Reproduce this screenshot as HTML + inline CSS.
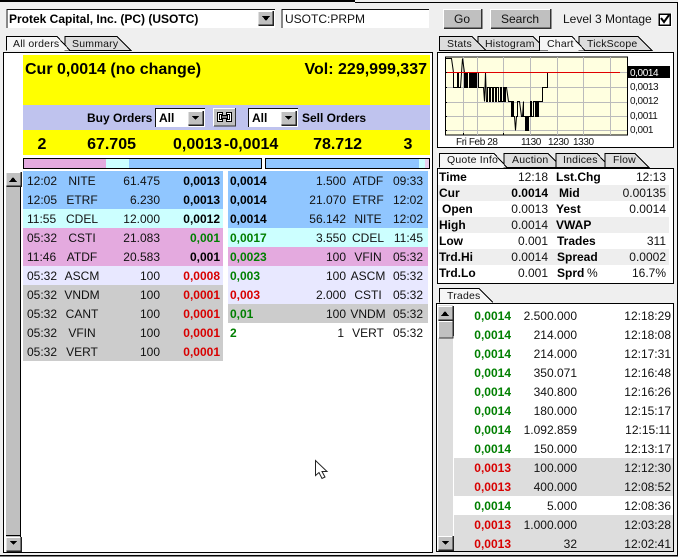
<!DOCTYPE html>
<html><head><meta charset="utf-8">
<style>
html,body{margin:0;padding:0;background:#fff;overflow:hidden}
svg{display:block}
text{font-family:"Liberation Sans",sans-serif;font-size:12px;fill:#111}
.b{font-weight:bold}
.r{text-anchor:end}
.c{text-anchor:middle}
.h{font-size:16px;font-weight:bold;fill:#000}
.t{font-size:10.5px;letter-spacing:.2px}
.s{font-size:10px;letter-spacing:-.4px}
.g{font-weight:bold;fill:#007f00}
.d{font-weight:bold;fill:#d80000}
.k{font-weight:bold;fill:#000}
</style></head><body>
<svg width="682" height="559" viewBox="0 0 682 559" xmlns="http://www.w3.org/2000/svg" shape-rendering="crispEdges">
<defs>
<g id="btn"><rect width="15" height="14" fill="#c0c0c0"/><path d="M0 13.5V.5H14.5" fill="none" stroke="#fff"/><path d="M.5 14H15V0" fill="none" stroke="#222" stroke-width="1.5"/></g>
</defs>
<rect x="0" y="0" width="678" height="556" fill="#efefef"/>
<rect x="0" y="0" width="355" height="2" fill="#000"/>
<rect x="355" y="2" width="323" height="1" fill="#000"/>
<rect x="677" y="2" width="1" height="554" fill="#000"/>
<rect x="0" y="555" width="678" height="1.5" fill="#000"/>

<!-- top controls -->
<rect x="6" y="9" width="269" height="19" fill="#fff"/>
<path d="M7 28V9.5H275" fill="none" stroke="#111"/>
<text x="9" y="23" class="b" style="fill:#000">Protek Capital, Inc. (PC) (USOTC)</text>
<use href="#btn" x="258" y="11"/>
<path d="M262 16h8l-4 5z" fill="#000"/>
<rect x="281" y="9" width="148" height="19" fill="#fff"/>
<path d="M282 28V9.5H429" fill="none" stroke="#111"/>
<text x="285" y="23">USOTC:PRPM</text>
<rect x="443" y="9" width="38" height="19" fill="#c0c0c0"/><path d="M443.500 28V9.500H481" fill="none" stroke="#fff"/><path d="M444 28H481.500V9" fill="none" stroke="#333" stroke-width="1.500"/>
<text x="462" y="23" class="c">Go</text>
<rect x="490" y="9" width="60" height="19" fill="#c0c0c0"/><path d="M490.500 28V9.500H550" fill="none" stroke="#fff"/><path d="M491 28H550.500V9" fill="none" stroke="#333" stroke-width="1.500"/>
<text x="520" y="23" class="c">Search</text>
<text x="563" y="23">Level 3 Montage</text>
<rect x="658" y="13" width="14" height="14" fill="#fff"/>
<rect x="659" y="14" width="11" height="11" fill="#fff" stroke="#000" stroke-width="1.500"/>
<path d="M661 18l3 4 5-7" fill="none" stroke="#000" stroke-width="2" shape-rendering="auto"/>

<!-- left tabs -->
<path d="M65 50.500V36.500H117L131 50.500Z" fill="#ddd" stroke="#000"/>
<path d="M6.500 50.500V36.500H57L70 50.500" fill="#f6f6f6" stroke="#000"/>
<text x="13" y="47" class="t">All orders</text>
<text x="72" y="47" class="t">Summary</text>

<!-- left panel -->
<rect x="3.500" y="52.500" width="429" height="500" fill="#fff" stroke="#000"/>
<rect x="23" y="55" width="407" height="50" fill="#ffff00"/>
<rect x="23" y="105" width="407" height="25" fill="#bfc3ee"/>
<rect x="23" y="130" width="407" height="25" fill="#ffff00"/>
<text x="25" y="74" class="h">Cur 0,0014 (no change)</text>
<text x="427" y="74" class="h r">Vol: 229,999,337</text>
<text x="87" y="122" class="k">Buy Orders</text>
<text x="302" y="122" class="k">Sell Orders</text>

<rect x="155" y="108" width="50" height="19" fill="#fff"/><path d="M155.500 127V108.500H205" fill="none" stroke="#111"/>
<text x="159" y="122" class="k">All</text>
<use href="#btn" x="188" y="111"/><path d="M192 116h7l-3.500 4z" fill="#000"/>
<rect x="248" y="108" width="50" height="19" fill="#fff"/><path d="M248.500 127V108.500H298" fill="none" stroke="#111"/>
<text x="252" y="122" class="k">All</text>
<use href="#btn" x="281" y="111"/><path d="M285 116h7l-3.500 4z" fill="#000"/>
<rect x="213" y="108" width="22" height="18" fill="#c0c0c0"/><path d="M213.500 126V108.500H235" fill="none" stroke="#fff"/><path d="M214 126H235.500V108" fill="none" stroke="#333"/>
<path d="M217.500 112.500h5v3h4v-3h5v9h-5v-3h-4v3h-5z" fill="#fff" stroke="#000"/>
<path d="M219.500 114.500h2v5h-2zM227.500 114.500h2v5h-2zM221 117h6" fill="none" stroke="#000"/>

<text x="42" y="149" class="h c">2</text>
<text x="136" y="149" class="h r">67.705</text>
<text x="173" y="149" class="h">0,0013</text>
<text x="224" y="149" class="h">-0,0014</text>
<text x="362" y="149" class="h r">78.712</text>
<text x="408" y="149" class="h c">3</text>

<rect x="24" y="159" width="82" height="9" fill="#e4aadf"/>
<rect x="106" y="159" width="23" height="9" fill="#ccffff"/>
<rect x="129" y="159" width="133" height="9" fill="#90c6ff"/>
<rect x="23.500" y="158.500" width="238" height="10" fill="none" stroke="#000"/>
<rect x="266" y="159" width="153" height="9" fill="#90c6ff"/>
<rect x="419" y="159" width="6" height="9" fill="#ccffff"/>
<rect x="425" y="159" width="4" height="9" fill="#e8d0ee"/>
<rect x="265.500" y="158.500" width="164" height="10" fill="none" stroke="#000"/>

<!-- left scrollbar -->
<rect x="6" y="172" width="15" height="378" fill="#c0c0c0"/>
<path d="M20.500 172V552" stroke="#000" fill="none"/>
<use href="#btn" x="6" y="172"/><path d="M9 182h8l-4-5z" fill="#000"/>
<rect x="6" y="535" width="15" height="1" fill="#000"/>
<use href="#btn" x="6" y="537"/><path d="M10 541h7l-3.500 4z" fill="#000"/>

<!-- left rows -->
<rect x="23" y="171" width="200" height="38" fill="#90c6ff"/>
<rect x="23" y="209" width="200" height="19" fill="#ccffff"/>
<rect x="23" y="228" width="200" height="38" fill="#e4aadf"/>
<rect x="23" y="266" width="200" height="19" fill="#e8e8ff"/>
<rect x="23" y="285" width="200" height="76" fill="#cccccc"/>
<g>
<text x="27" y="185">12:02</text><text x="82" y="185" class="c">NITE</text><text x="160" y="185" class="r">61.475</text><text x="220" y="185" class="r k">0,0013</text>
<text x="27" y="204">12:05</text><text x="82" y="204" class="c">ETRF</text><text x="160" y="204" class="r">6.230</text><text x="220" y="204" class="r k">0,0013</text>
<text x="27" y="223">11:55</text><text x="82" y="223" class="c">CDEL</text><text x="160" y="223" class="r">12.000</text><text x="220" y="223" class="r k">0,0012</text>
<text x="27" y="242">05:32</text><text x="82" y="242" class="c">CSTI</text><text x="160" y="242" class="r">21.083</text><text x="220" y="242" class="r g">0,001</text>
<text x="27" y="261">11:46</text><text x="82" y="261" class="c">ATDF</text><text x="160" y="261" class="r">20.583</text><text x="220" y="261" class="r k">0,001</text>
<text x="27" y="280">05:32</text><text x="82" y="280" class="c">ASCM</text><text x="160" y="280" class="r">100</text><text x="220" y="280" class="r d">0,0008</text>
<text x="27" y="299">05:32</text><text x="82" y="299" class="c">VNDM</text><text x="160" y="299" class="r">100</text><text x="220" y="299" class="r d">0,0001</text>
<text x="27" y="318">05:32</text><text x="82" y="318" class="c">CANT</text><text x="160" y="318" class="r">100</text><text x="220" y="318" class="r d">0,0001</text>
<text x="27" y="337">05:32</text><text x="82" y="337" class="c">VFIN</text><text x="160" y="337" class="r">100</text><text x="220" y="337" class="r d">0,0001</text>
<text x="27" y="356">05:32</text><text x="82" y="356" class="c">VERT</text><text x="160" y="356" class="r">100</text><text x="220" y="356" class="r d">0,0001</text>
</g>

<!-- right rows -->
<rect x="228" y="171" width="200" height="57" fill="#90c6ff"/>
<rect x="228" y="228" width="200" height="19" fill="#ccffff"/>
<rect x="228" y="247" width="200" height="19" fill="#e4aadf"/>
<rect x="228" y="266" width="200" height="38" fill="#e8e8ff"/>
<rect x="228" y="304" width="200" height="19" fill="#cccccc"/>
<g>
<text x="230" y="185" class="k">0,0014</text><text x="346" y="185" class="r">1.500</text><text x="368" y="185" class="c">ATDF</text><text x="423" y="185" class="r">09:33</text>
<text x="230" y="204" class="k">0,0014</text><text x="346" y="204" class="r">21.070</text><text x="368" y="204" class="c">ETRF</text><text x="423" y="204" class="r">12:02</text>
<text x="230" y="223" class="k">0,0014</text><text x="346" y="223" class="r">56.142</text><text x="368" y="223" class="c">NITE</text><text x="423" y="223" class="r">12:02</text>
<text x="230" y="242" class="g">0,0017</text><text x="346" y="242" class="r">3.550</text><text x="368" y="242" class="c">CDEL</text><text x="423" y="242" class="r">11:45</text>
<text x="230" y="261" class="g">0,0023</text><text x="346" y="261" class="r">100</text><text x="368" y="261" class="c">VFIN</text><text x="423" y="261" class="r">05:32</text>
<text x="230" y="280" class="g">0,003</text><text x="346" y="280" class="r">100</text><text x="368" y="280" class="c">ASCM</text><text x="423" y="280" class="r">05:32</text>
<text x="230" y="299" class="d">0,003</text><text x="346" y="299" class="r">2.000</text><text x="368" y="299" class="c">CSTI</text><text x="423" y="299" class="r">05:32</text>
<text x="230" y="318" class="g">0,01</text><text x="346" y="318" class="r">100</text><text x="368" y="318" class="c">VNDM</text><text x="423" y="318" class="r">05:32</text>
<text x="230" y="337" class="g">2</text><text x="344" y="337" class="r">1</text><text x="368" y="337" class="c">VERT</text><text x="423" y="337" class="r">05:32</text>
</g>

<!-- cursor -->
<path d="M315.500 460.500V475.500L319 472.500L322 478.500L325 477L322 471.500H327Z" fill="#fff" stroke="#222" shape-rendering="auto"/>

<!-- right tabs -->
<path d="M478 50.500V36.500H533L547 50.500Z" fill="#ddd" stroke="#000"/>
<path d="M439.500 50.500V36.500H472L486 50.500Z" fill="#ddd" stroke="#000"/>
<path d="M579 50.500V36.500H638L652 50.500Z" fill="#ddd" stroke="#000"/>
<path d="M539.500 50.500V36.500H572L585 50.500" fill="#f6f6f6" stroke="#000"/>
<text x="447" y="47" class="t">Stats</text>
<text x="485" y="47" class="t">Histogram</text>
<text x="547" y="47" class="t">Chart</text>
<text x="587" y="47" class="t">TickScope</text>

<!-- chart -->
<rect x="437.500" y="52.500" width="236" height="95" fill="#fff" stroke="#000"/>
<rect x="445.500" y="57" width="182" height="78" fill="#ffffe0" stroke="#000"/>
<path d="M463.500 57V135M477.500 57V135M503.500 57V135M530.500 57V135M557.500 57V135M583.500 57V135M610.500 57V135M446 87.500H627M446 102.500H627M446 116.500H627M446 130.500H627" stroke="#bbb" fill="none"/>
<path d="M620 72.500H627" stroke="#bbb" fill="none"/>
<path d="M446 58.500H451.500L453.500 72.500V87.500H457.500V72.500H458.500V87.500H460.500L462.500 58.500L464.500 72.500V87.500H465.500V72.500H466.500V87.500H467.500V72.500H469.500V87.500H470.500V72.500H471.500V87.500H472.500V72.500H473.500V87.500H474.500V72.500H475.500V87.500H476.500V72.500H478.500V87.500H483.500L484.500 101.500L485.500 72.500L486.500 101.500H487.500V87.500H489.500V101.500H490.500V87.500H492.500V101.500H493.500V87.500H495.500V101.500H496.500V87.500H498.500V101.500H500.500V87.500H501.500V101.500H503.500V87.500H504.500V101.500H505.500V87.500H506.500L508.500 101.500H511.500V116.500H512.500V101.500H513.500V116.500H514.500L515.500 130.500L516.500 116.500H517.500V101.500H519.500L521.500 116.500H522.500L523.500 101.500V116.500H525.500V130.500H526.500V116.500H527.500V130.500H528.500V116.500H530.500V101.500H531.500V116.500H533.500V101.500H535.500V116.500H536.500V101.500H537.500V116.500H538.500V101.500H542.500V87.500H547.500V72.500" fill="none" stroke="#000" shape-rendering="auto"/>
<path d="M446 72.500H620" stroke="#e00000" fill="none"/>
<path d="M445 72.500h2M445 87.500h2M445 102.500h2M445 116.500h2M445 130.500h2M463.500 135v-2M503.500 135v-2" stroke="#000" fill="none"/>
<rect x="628" y="66" width="42" height="12" fill="#000"/>
<text x="630" y="76" class="s" style="fill:#fff">0,0014</text>
<text x="630" y="90" class="s">0,0013</text>
<text x="630" y="104" class="s">0,0012</text>
<text x="630" y="119" class="s">0,0011</text>
<text x="630" y="133" class="s">0,001</text>
<text x="456" y="145" class="s">Fri Feb 28</text>
<text x="521" y="145" class="s">1130</text>
<text x="548" y="145" class="s">1230</text>
<text x="573" y="145" class="s">1330</text>

<!-- quote tabs -->
<path d="M504 167.500V153.500H548L562 167.500Z" fill="#ddd" stroke="#000"/>
<path d="M556 167.500V153.500H597L610 167.500Z" fill="#ddd" stroke="#000"/>
<path d="M605 167.500V153.500H635L649 167.500Z" fill="#ddd" stroke="#000"/>
<path d="M439.500 167.500V153.500H494L507 167.500" fill="#f6f6f6" stroke="#000"/>
<text x="447" y="163" class="t">Quote Info</text>
<text x="512" y="163" class="t">Auction</text>
<text x="563" y="163" class="t">Indices</text>
<text x="613" y="163" class="t">Flow</text>

<!-- quote box -->
<rect x="437.500" y="168.500" width="236" height="115" fill="#fff" stroke="#000"/>
<rect x="438" y="185" width="231" height="16" fill="#eeeeee"/>
<rect x="438" y="217" width="231" height="16" fill="#eeeeee"/>
<rect x="438" y="249" width="231" height="16" fill="#eeeeee"/>
<text x="439" y="181" class="k">Time</text><text x="548" y="181" class="r">12:18</text><text x="556" y="181" class="k">Lst.Chg</text><text x="666" y="181" class="r">12:13</text>
<text x="439" y="197" class="k">Cur</text><text x="548" y="197" class="r k">0.0014</text><text x="559" y="197" class="k">Mid</text><text x="666" y="197" class="r">0.00135</text>
<text x="442" y="213" class="k">Open</text><text x="548" y="213" class="r">0.0013</text><text x="556" y="213" class="k">Yest</text><text x="666" y="213" class="r">0.0014</text>
<text x="439" y="229" class="k">High</text><text x="548" y="229" class="r">0.0014</text><text x="556" y="229" class="k">VWAP</text>
<text x="439" y="245" class="k">Low</text><text x="548" y="245" class="r">0.001</text><text x="557" y="245" class="k">Trades</text><text x="666" y="245" class="r">311</text>
<text x="439" y="261" class="k">Trd.Hi</text><text x="548" y="261" class="r">0.0014</text><text x="557" y="261" class="k">Spread</text><text x="666" y="261" class="r">0.0002</text>
<text x="439" y="277" class="k">Trd.Lo</text><text x="548" y="277" class="r">0.001</text><text x="557" y="277" class="k">Sprd</text><text x="587" y="277">%</text><text x="666" y="277" class="r">16.7%</text>

<!-- trades -->
<path d="M439.500 302.500V288.500H479L493 302.500" fill="#f6f6f6" stroke="#000"/>
<text x="447" y="299" class="t">Trades</text>
<rect x="436.500" y="303.500" width="237" height="248" fill="#fff" stroke="#000"/>
<rect x="438" y="305" width="15" height="246" fill="#dddddd"/>
<use href="#btn" x="438" y="306"/><path d="M441 316h8l-4-5z" fill="#000"/>
<use href="#btn" x="438" y="321"/><rect x="438" y="321" width="15" height="17" fill="#c0c0c0"/><path d="M438.500 338V321.500H453" fill="none" stroke="#fff"/><path d="M439 338H453V321" fill="none" stroke="#333"/>
<use href="#btn" x="438" y="536"/><path d="M442 541h7l-3.500 4z" fill="#000"/>
<rect x="454" y="458" width="219" height="38" fill="#dddddd"/>
<rect x="454" y="515" width="219" height="36" fill="#dddddd"/>
<g>
<text x="511" y="320" class="r g">0,0014</text><text x="577" y="320" class="r">2.500.000</text><text x="671" y="320" class="r">12:18:29</text>
<text x="511" y="339" class="r g">0,0014</text><text x="577" y="339" class="r">214.000</text><text x="671" y="339" class="r">12:18:08</text>
<text x="511" y="358" class="r g">0,0014</text><text x="577" y="358" class="r">214.000</text><text x="671" y="358" class="r">12:17:31</text>
<text x="511" y="377" class="r g">0,0014</text><text x="577" y="377" class="r">350.071</text><text x="671" y="377" class="r">12:16:48</text>
<text x="511" y="396" class="r g">0,0014</text><text x="577" y="396" class="r">340.800</text><text x="671" y="396" class="r">12:16:26</text>
<text x="511" y="415" class="r g">0,0014</text><text x="577" y="415" class="r">180.000</text><text x="671" y="415" class="r">12:15:17</text>
<text x="511" y="434" class="r g">0,0014</text><text x="577" y="434" class="r">1.092.859</text><text x="671" y="434" class="r">12:15:11</text>
<text x="511" y="453" class="r g">0,0014</text><text x="577" y="453" class="r">150.000</text><text x="671" y="453" class="r">12:13:17</text>
<text x="511" y="472" class="r d">0,0013</text><text x="577" y="472" class="r">100.000</text><text x="671" y="472" class="r">12:12:30</text>
<text x="511" y="491" class="r d">0,0013</text><text x="577" y="491" class="r">400.000</text><text x="671" y="491" class="r">12:08:52</text>
<text x="511" y="510" class="r g">0,0014</text><text x="577" y="510" class="r">5.000</text><text x="671" y="510" class="r">12:08:36</text>
<text x="511" y="529" class="r d">0,0013</text><text x="577" y="529" class="r">1.000.000</text><text x="671" y="529" class="r">12:03:28</text>
<text x="511" y="548" class="r d">0,0013</text><text x="577" y="548" class="r">32</text><text x="671" y="548" class="r">12:02:41</text>
</g>
</svg>
</body></html>
